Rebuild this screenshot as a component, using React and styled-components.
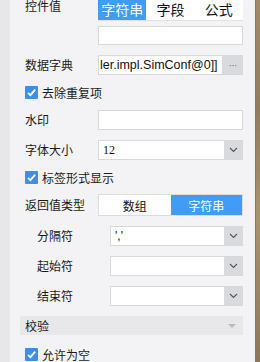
import React from 'react'
import styled, { createGlobalStyle } from 'styled-components'

const GlobalStyle = createGlobalStyle`
    html, body {
        margin: 0;
        padding: 0;
        background: #f3f3f5;
    }
    body {
        font-family: "Noto Sans CJK SC", "Liberation Sans", sans-serif;
        font-size: 12px;
        color: #1a1a1a;
    }
`

const Chevron = () => (
    <svg width="9" height="6" viewBox="0 0 9 6">
        <path d="M1 1 L4.5 4.5 L8 1" fill="none" stroke="#555" strokeWidth="1.1" />
    </svg>
)

const Check = () => (
    <svg width="13" height="13" viewBox="0 0 13 13">
        <path d="M3 6.8 L5.4 9.2 L10.2 3.6" fill="none" stroke="#fff" strokeWidth="1.8" />
    </svg>
)

const App = () => {
    return (
        <Page>
            <GlobalStyle />
            <LeftStrip />
            <Panel>
                <TopRow>
                    <Label $top>控件值</Label>
                    <Stack>
                        <Tabs>
                            <Tab $active>字符串</Tab>
                            <Tab>字段</Tab>
                            <Tab>公式</Tab>
                        </Tabs>
                        <TextInput readOnly value="" />
                    </Stack>
                </TopRow>
                <Row>
                    <Label>数据字典</Label>
                    <Field>
                        <FieldText>ler.impl.SimConf@0]]</FieldText>
                        <DotsButton>···</DotsButton>
                    </Field>
                </Row>
                <CheckRow>
                    <Box><Check /></Box>
                    <span>去除重复项</span>
                </CheckRow>
                <Row>
                    <Label>水印</Label>
                    <TextInput readOnly value="" />
                </Row>
                <Row>
                    <Label>字体大小</Label>
                    <Field>
                        <SelectText $serif>12</SelectText>
                        <ArrowButton><Chevron /></ArrowButton>
                    </Field>
                </Row>
                <CheckRow>
                    <Box><Check /></Box>
                    <span>标签形式显示</span>
                </CheckRow>
                <Row $mt={9}>
                    <Label>返回值类型</Label>
                    <Toggle>
                        <ToggleItem>数组</ToggleItem>
                        <ToggleItem $active>字符串</ToggleItem>
                    </Toggle>
                </Row>
                <Row $indent>
                    <Label>分隔符</Label>
                    <Field>
                        <SelectText>','</SelectText>
                        <ArrowButton><Chevron /></ArrowButton>
                    </Field>
                </Row>
                <Row $indent>
                    <Label>起始符</Label>
                    <Field>
                        <SelectText />
                        <ArrowButton><Chevron /></ArrowButton>
                    </Field>
                </Row>
                <Row $indent>
                    <Label>结束符</Label>
                    <Field>
                        <SelectText />
                        <ArrowButton><Chevron /></ArrowButton>
                    </Field>
                </Row>
                <SectionHeader>
                    <span>校验</span>
                    <Triangle />
                </SectionHeader>
                <CheckRow $mt={12}>
                    <Box><Check /></Box>
                    <span>允许为空</span>
                </CheckRow>
            </Panel>
            <RightEdge />
        </Page>
    )
}

const Page = styled.div`
    display: flex;
    width: 260px;
    height: 362px;
    overflow: hidden;
`

const LeftStrip = styled.div`
    width: 10px;
    flex-shrink: 0;
    background: #e7e7e7;
`

const Panel = styled.div`
    flex: 1;
    display: flex;
    flex-direction: column;
    gap: 10px;
    padding: 0 12px 0 10px;
    background: #f3f3f5;
    margin-top: -2px;
`

const RightEdge = styled.div`
    width: 4px;
    flex-shrink: 0;
    border-left: 1px solid #7d7a74;
    background: linear-gradient(180deg, #a08c66 0%, #8f7d5c 30%, #a8946c 60%, #8a7858 100%);
`

const TopRow = styled.div`
    display: flex;
    align-items: flex-start;
    padding-left: 5px;
`

const Row = styled.div`
    display: flex;
    align-items: center;
    padding-left: ${p => (p.$indent ? '17px' : '5px')};
    margin-top: ${p => (p.$mt ? p.$mt - 10 : 0)}px;
`

const Label = styled.div`
    width: 73px;
    flex-shrink: 0;
    font-size: 12px;
    line-height: ${p => (p.$top ? '16px' : '20px')};
    color: #1a1a1a;
    white-space: nowrap;
`

const Stack = styled.div`
    flex: 1;
    display: flex;
    flex-direction: column;
    gap: 5px;
`

const Tabs = styled.div`
    display: flex;
    height: 22px;
    background: #fff;
    border-bottom: 1px solid #e2e2e4;
`

const Tab = styled.div`
    flex: 1;
    display: flex;
    align-items: center;
    justify-content: center;
    font-size: 14px;
    color: ${p => (p.$active ? '#fff' : '#111')};
    background: ${p => (p.$active ? '#409cf4' : 'transparent')};
`

const TextInput = styled.input`
    flex: 1;
    box-sizing: border-box;
    width: 100%;
    height: 20px;
    margin: 0;
    padding: 0 4px;
    border: 1px solid #d8d8da;
    background: #fff;
    outline: none;
    font: inherit;
`

const Field = styled.div`
    flex: 1;
    display: flex;
    height: 20px;
    box-sizing: border-box;
    border: 1px solid #d8d8da;
    border-right: none;
    background: #fff;
    overflow: hidden;
`

const FieldText = styled.div`
    flex: 1;
    overflow: hidden;
    white-space: nowrap;
    font-family: "Liberation Sans", sans-serif;
    font-size: 12.5px;
    line-height: 18px;
    padding-left: 1px;
    color: #111;
`

const SelectText = styled.div`
    flex: 1;
    overflow: hidden;
    white-space: nowrap;
    font-family: ${p => (p.$serif ? '"Liberation Serif", serif' : '"Liberation Sans", sans-serif')};
    font-size: 12px;
    line-height: 18px;
    padding-left: 4px;
    color: #111;
`

const DotsButton = styled.div`
    width: 21px;
    margin: -1px 0;
    display: flex;
    align-items: center;
    justify-content: center;
    background: #d9dadd;
    color: #7a7a7a;
    font-family: "Liberation Sans", sans-serif;
    font-size: 11px;
    letter-spacing: -1px;
`

const ArrowButton = styled.div`
    width: 19px;
    margin: -1px 0;
    display: flex;
    align-items: center;
    justify-content: center;
    background: #d9dadd;
`

const CheckRow = styled.div`
    display: flex;
    align-items: center;
    gap: 4px;
    height: 15px;
    padding-left: 5px;
    margin-top: ${p => (p.$mt ? p.$mt - 10 : 0)}px;
    font-size: 12px;
    color: #1a1a1a;
`

const Box = styled.div`
    width: 13px;
    height: 13px;
    border-radius: 1px;
    background: #3d8fe8;
    display: flex;
`

const Toggle = styled.div`
    flex: 1;
    display: flex;
    height: 22px;
    box-sizing: border-box;
    border: 1px solid #dcdcde;
    background: #fff;
`

const ToggleItem = styled.div`
    flex: 1;
    display: flex;
    align-items: center;
    justify-content: center;
    font-size: 12px;
    color: ${p => (p.$active ? '#fff' : '#111')};
    background: ${p => (p.$active ? '#409cf4' : 'transparent')};
`

const SectionHeader = styled.div`
    display: flex;
    align-items: center;
    justify-content: space-between;
    height: 20px;
    padding: 0 7px 0 5px;
    background: #e8e8ea;
    font-size: 12px;
    color: #1a1a1a;
`

const Triangle = styled.div`
    width: 0;
    height: 0;
    border-left: 4px solid transparent;
    border-right: 4px solid transparent;
    border-top: 4px solid #b9b9bb;
`

export default App
